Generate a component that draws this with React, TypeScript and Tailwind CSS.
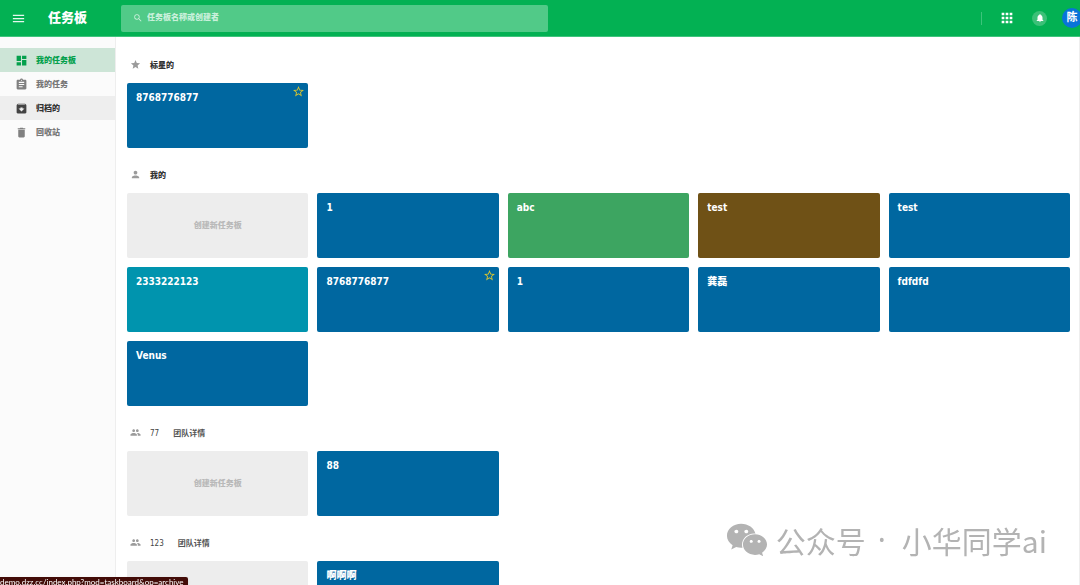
import type { ReactNode } from "react";
import type { IconType } from "react-icons";
import {
  MdApps,
  MdArchive,
  MdAssignment,
  MdDashboard,
  MdDelete,
  MdMenu,
  MdNotifications,
  MdPeople,
  MdPerson,
  MdSearch,
  MdStar,
  MdStarBorder,
} from "react-icons/md";
import { FaWeixin } from "react-icons/fa";

type Board = { name: string; color: string; starred?: boolean };

const BLUE = "bg-[#0067a0]";

const starredBoards: Board[] = [{ name: "8768776877", color: BLUE, starred: true }];

const myBoards: Board[] = [
  { name: "1", color: BLUE },
  { name: "abc", color: "bg-[#3da561]" },
  { name: "test", color: "bg-[#6f5116]" },
  { name: "test", color: BLUE },
  { name: "2333222123", color: "bg-[#0094ae]" },
  { name: "8768776877", color: BLUE, starred: true },
  { name: "1", color: BLUE },
  { name: "龚磊", color: BLUE },
  { name: "fdfdfd", color: BLUE },
  { name: "Venus", color: BLUE },
];

const navItems: { label: string; icon: IconType; style: string; iconStyle: string }[] = [
  { label: "我的任务板", icon: MdDashboard, style: "bg-[#cde5d7] text-[#04a04c]", iconStyle: "text-[#04a04c]" },
  { label: "我的任务", icon: MdAssignment, style: "text-[#777777]", iconStyle: "text-[#808080]" },
  { label: "归档的", icon: MdArchive, style: "bg-[#eeeeee] text-[#333333]", iconStyle: "text-[#444444]" },
  { label: "回收站", icon: MdDelete, style: "text-[#777777]", iconStyle: "text-[#808080]" },
];

function BoardCard({ board }: { board: Board }) {
  return (
    <div className={`flex h-[65px] items-start justify-between rounded-xs pl-[9px] pr-[3px] text-white ${board.color}`}>
      <a href="#board" className="mt-2 text-[10px] leading-[14px] font-black">
        {board.name}
      </a>
      {board.starred && (
        <button type="button" aria-label="取消标星" className="mt-[2px] text-[#d9c52f]">
          <MdStarBorder size={13} />
        </button>
      )}
    </div>
  );
}

function Section({
  icon: Icon,
  title,
  detail,
  creatable,
  boards,
}: {
  icon: IconType;
  title: ReactNode;
  detail?: string;
  creatable?: boolean;
  boards: Board[];
}) {
  return (
    <section>
      <div className="flex h-[45px] items-center pt-2 pl-[3px] text-[8px] leading-3">
        <Icon size={11} className="mr-[9px] text-[#9b9b9b]" />
        {detail ? (
          <>
            <h2 className="pt-[2px] text-[#444444]">{title}</h2>
            <a href="#team" className="ml-[14px] pt-[2px] font-bold text-[#555555]">
              {detail}
            </a>
          </>
        ) : (
          <h2 className="pt-[2px] font-black text-[#333333]">{title}</h2>
        )}
      </div>
      <div className="grid grid-cols-5 gap-[9px]">
        {creatable && (
          <button
            type="button"
            className="h-[65px] rounded-xs bg-[#ededed] text-[8px] leading-3 font-black text-[#b9b9b9]"
          >
            创建新任务板
          </button>
        )}
        {boards.map((board, i) => (
          <BoardCard key={i} board={board} />
        ))}
      </div>
    </section>
  );
}

export default function App() {
  return (
    <div className="flex h-screen flex-col overflow-hidden bg-white font-['DejaVu_Sans_Condensed','Noto_Sans_CJK_SC',sans-serif]">
      <header className="flex h-[37px] shrink-0 items-center border-b border-[#3fc47d] bg-[#03b153] text-white">
        <button type="button" aria-label="菜单" className="ml-[11px] text-white/90">
          <MdMenu size={15} />
        </button>
        <h1 className="ml-[22px] w-[73px] text-[13px] leading-5 font-black">任务板</h1>
        <label className="flex h-[27px] w-[427px] items-center rounded-xs bg-[#51ca88] pl-3">
          <MdSearch size={10} className="mr-1 text-white/70" />
          <input
            type="search"
            aria-label="搜索"
            placeholder="任务板名称或创建者"
            className="min-w-0 flex-1 bg-transparent text-[8px] leading-3 font-black text-white outline-none placeholder:text-[#c9f0db]"
          />
        </label>
        <div className="-mr-[2px] ml-auto flex items-center">
          <span className="mr-[17px] h-[13px] w-px bg-[#3cc47b]" />
          <button type="button" aria-label="应用">
            <MdApps size={16} />
          </button>
          <button
            type="button"
            aria-label="通知"
            className="ml-[17px] flex size-[15px] items-center justify-center rounded-full bg-[#3cc078]"
          >
            <MdNotifications size={10} />
          </button>
          <button
            type="button"
            aria-label="账户"
            className="ml-[15px] flex size-[20px] items-center justify-center rounded-full bg-[#0874d9] text-[11px] leading-4 font-bold"
          >
            陈
          </button>
        </div>
      </header>

      <div className="flex min-h-0 flex-1">
        <nav className="w-[116px] shrink-0 border-r border-[#eeeeee] bg-[#fbfbfb] pt-[11px]">
          {navItems.map(({ label, icon: Icon, style, iconStyle }) => (
            <a
              key={label}
              href="#nav"
              className={`flex h-6 items-center gap-2 pl-[15px] text-[8px] leading-3 font-black ${style}`}
            >
              <Icon size={13} className={iconStyle} />
              <span className="pt-[2px]">{label}</span>
            </a>
          ))}
        </nav>
        <main className="min-w-0 flex-1 overflow-hidden border-r border-[#eeeeee] pt-px pr-[9px] pl-[11px]">
          <Section icon={MdStar} title="标星的" boards={starredBoards} />
          <Section icon={MdPerson} title="我的" creatable boards={myBoards} />
          <Section icon={MdPeople} title="77" detail="团队详情" creatable boards={[{ name: "88", color: BLUE }]} />
          <Section icon={MdPeople} title="123" detail="团队详情" creatable boards={[{ name: "啊啊啊", color: BLUE }]} />
        </main>
      </div>

      <div className="pointer-events-none fixed right-[33px] bottom-[23px] flex items-center font-['Noto_Sans_CJK_SC',sans-serif] text-[30px] leading-[44px] text-[#b3b3b3]">
        <FaWeixin size={42} className="mr-2" />
        <span>公众号</span>
        <span className="w-9 pr-1 text-center font-['Noto_Sans',sans-serif]">·</span>
        <span>小华同学ai</span>
      </div>

      <div className="fixed bottom-0 left-0 h-2 overflow-hidden rounded-tr-xs bg-[#430c08] pr-1 font-['Lato',sans-serif] text-[8px] leading-[11px] text-white shadow">
        demo.dzz.cc/index.php?mod=taskboard&amp;op=archive
      </div>
    </div>
  );
}
